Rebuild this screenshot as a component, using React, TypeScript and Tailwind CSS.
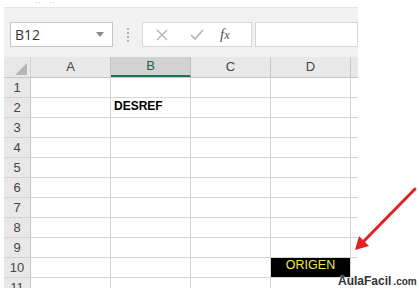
const cols = ["A", "B", "C", "D"];
const rows = [1, 2, 3, 4, 5, 6, 7, 8, 9, 10, 11];

function Cell({ row, col }: { row: number; col: string }) {
  if (row === 2 && col === "B") {
    return (
      <div className="w-[80px] h-full border-r border-[#d4d4d4] flex items-end pb-[2px] pl-[3px] text-[12px] font-bold text-black">
        DESREF
      </div>
    );
  }
  if (row === 10 && col === "D") {
    return (
      <div className="w-[80px] h-full border-r border-[#d4d4d4] bg-black flex items-end justify-center pb-[2px] text-[12.5px] text-[#eeea4c]">
        ORIGEN
      </div>
    );
  }
  return <div className="w-[80px] h-full border-r border-[#d4d4d4]" />;
}

export default function App() {
  return (
    <div className="relative w-[419px] h-[288px] overflow-hidden bg-white font-['Liberation_Sans',Arial,sans-serif]">
      {/* strip of ribbon cut off above */}
      <div className="h-[7px] flex items-end gap-[10px] pl-[36px]">
        <span className="text-[6px] leading-[6px] text-[#9a9a9a]">' '</span>
        <span className="text-[6px] leading-[6px] text-[#9a9a9a]">' '</span>
      </div>

      <div className="ml-[4px] w-[354px]">
        {/* formula bar */}
        <div className="h-[50px] bg-[#f1f1f1] border-t border-[#e4e4e4] pt-[14px] flex items-start">
          <div className="ml-[6px] w-[103px] h-[25px] bg-white border border-[#c6c6c6] flex items-center justify-between pl-[4px] pr-[8px]">
            <span className="text-[14px] text-[#333] font-['Open_Sans',sans-serif]">B12</span>
            <svg width="8" height="5" viewBox="0 0 8 5">
              <path d="M0 0 L8 0 L4 5 Z" fill="#8a8a8a" />
            </svg>
          </div>
          <div className="w-[29px] h-[25px] flex flex-col items-center justify-center gap-[2px]">
            <span className="w-[2px] h-[2px] bg-[#b0b0b0]" />
            <span className="w-[2px] h-[2px] bg-[#b0b0b0]" />
            <span className="w-[2px] h-[2px] bg-[#b0b0b0]" />
            <span className="w-[2px] h-[2px] bg-[#b0b0b0]" />
          </div>
          <div className="w-[110px] h-[25px] bg-white border border-[#d6d6d6] flex items-center pl-[12px]">
            <svg width="12" height="12" viewBox="0 0 12 12" className="ml-[1px]">
              <path d="M1 1 L11 11 M11 1 L1 11" stroke="#b4b4b4" strokeWidth="1.4" />
            </svg>
            <svg width="14" height="12" viewBox="0 0 14 12" className="ml-[22px]">
              <path d="M1 6 L5 10 L13 1" stroke="#b4b4b4" strokeWidth="1.6" fill="none" />
            </svg>
            <span className="ml-[16px] text-[15px] italic text-[#555] font-['Liberation_Serif',serif]">
              f<span className="text-[12px]">x</span>
            </span>
          </div>
          <div className="ml-[3px] w-[103px] h-[25px] bg-white border border-[#d6d6d6]" />
        </div>

        {/* column headers */}
        <div className="h-[21px] flex bg-[#e8e8e8] border-b border-[#c6c6c6]">
          <div className="w-[27px] h-full border-r border-[#d0d0d0] flex items-end justify-end pr-[3px] pb-[2px]">
            <svg width="12" height="12" viewBox="0 0 12 12">
              <path d="M12 0 L12 12 L0 12 Z" fill="#b6b6b6" />
            </svg>
          </div>
          {cols.map((c) =>
            c === "B" ? (
              <div
                key={c}
                className="w-[80px] h-full bg-[#d2d2d2] border-r border-[#c0c0c0] border-b-2 border-b-[#217346] flex items-center justify-center text-[13px] text-[#2f5a44]"
              >
                {c}
              </div>
            ) : (
              <div
                key={c}
                className="w-[80px] h-full border-r border-[#c6c6c6] flex items-center justify-center text-[13px] text-[#444]"
              >
                {c}
              </div>
            )
          )}
        </div>

        {/* rows */}
        {rows.map((r) => (
          <div key={r} className="h-[20px] flex border-b border-[#d4d4d4]">
            <div className="w-[27px] h-full bg-[#e8e8e8] border-r border-[#c6c6c6] flex items-center justify-center text-[13px] text-[#444]">
              {r}
            </div>
            {cols.map((c) => (
              <Cell key={c} row={r} col={c} />
            ))}
          </div>
        ))}
      </div>

      {/* red arrow */}
      <svg className="absolute left-0 top-0" width="419" height="288" viewBox="0 0 419 288">
        <path d="M415 189 L362 243" stroke="#e02222" strokeWidth="3" strokeLinecap="round" />
        <path d="M355 250 L359 236 L369 246 Z" fill="#e02222" />
      </svg>

      {/* watermark */}
      <div className="absolute left-[338px] top-[272px] flex items-baseline text-[#333] font-bold [text-shadow:0_0_2px_#fff,0_0_2px_#fff]">
        <span className="text-[12px]">AulaFacil</span>
        <span className="text-[10px] ml-[2px]">.com</span>
      </div>
    </div>
  );
}
